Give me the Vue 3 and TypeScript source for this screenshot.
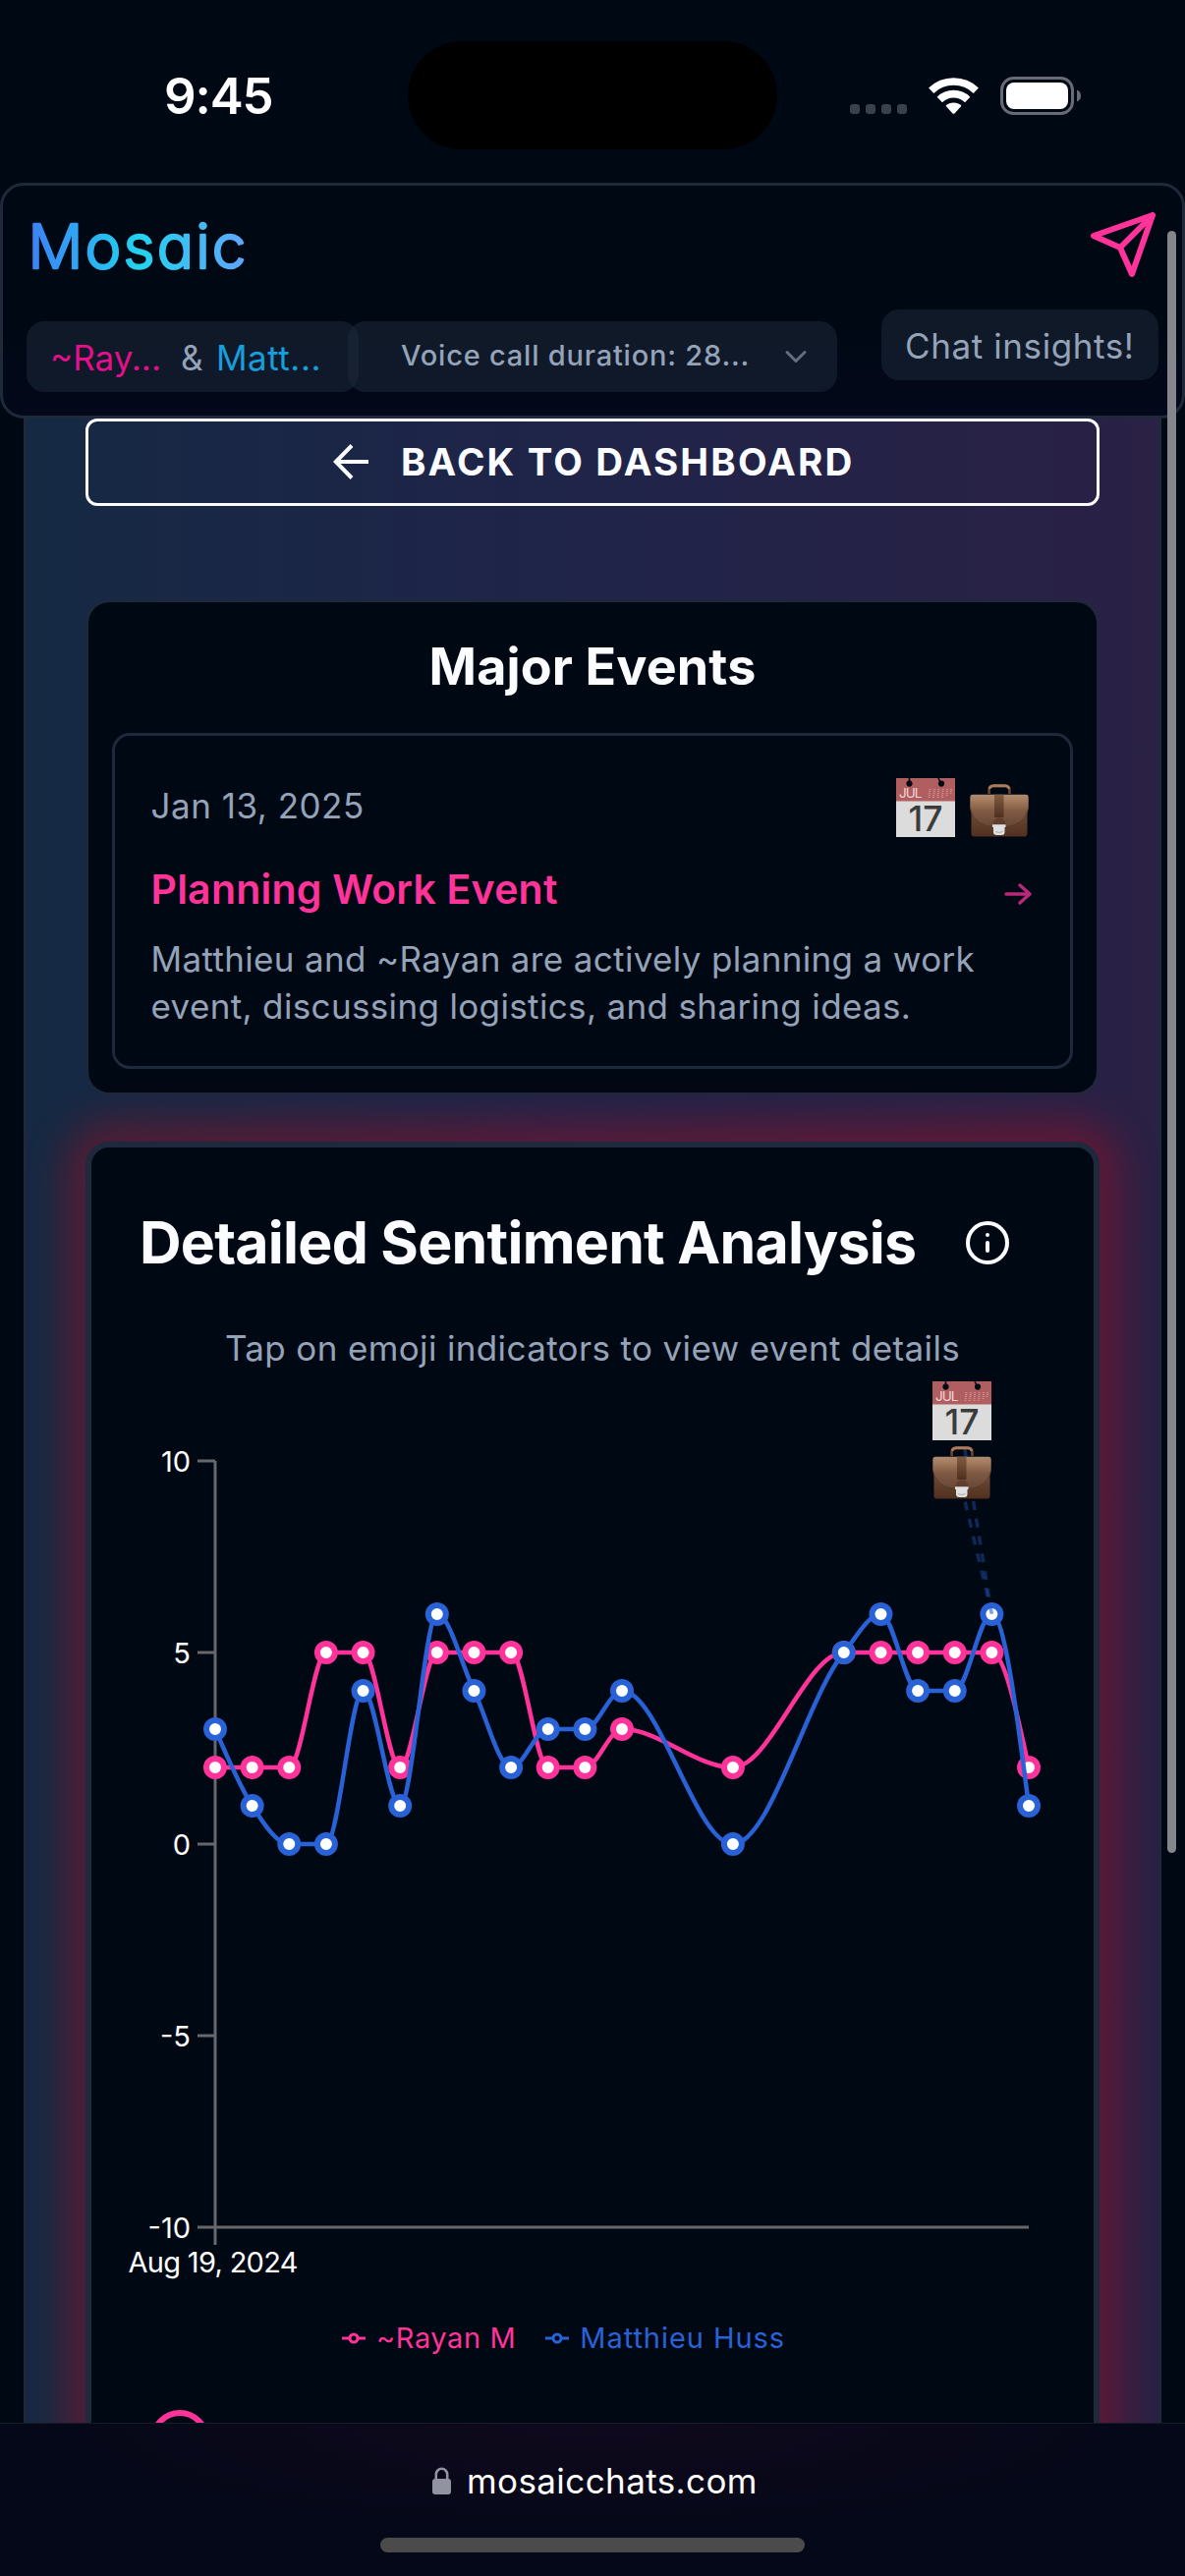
<script setup lang="ts">
import { h, type FunctionalComponent } from 'vue'

type Point = [number, number]

interface Series {
  name: string
  color: string
  values: Point[]
}

const PLOT = { left: 126, top: 91, width: 828, height: 780, steps: 22 }

const px = (i: number) => PLOT.left + (i * PLOT.width) / PLOT.steps
const py = (v: number) => PLOT.top + ((10 - v) * PLOT.height) / 20

const ticks = [10, 5, 0, -5, -10]

const days = [0, 1, 2, 3, 4, 5, 6, 7, 8, 9, 10, 11, 14, 17, 18, 19, 20, 21, 22]
const withDays = (scores: number[]): Point[] => scores.map((s, i) => [px(days[i]), py(s)])

const series: Series[] = [
  { name: '~Rayan M', color: '#ff3399', values: withDays([2, 2, 2, 5, 5, 2, 5, 5, 5, 2, 2, 3, 2, 5, 5, 5, 5, 5, 2]) },
  { name: 'Matthieu Huss', color: '#2962d6', values: withDays([3, 1, 0, 0, 4, 1, 6, 4, 2, 3, 3, 4, 0, 5, 6, 4, 4, 6, 1]) },
]

/* Monotone cubic interpolation through the points, as a path of Béziers. */
function monotone(p: Point[]): string {
  const n = p.length
  const slope = (i: number) => (p[i + 1][1] - p[i][1]) / (p[i + 1][0] - p[i][0])
  const t: number[] = new Array(n).fill(0)
  for (let i = 1; i < n - 1; i++) {
    const h0 = p[i][0] - p[i - 1][0]
    const h1 = p[i + 1][0] - p[i][0]
    const s0 = slope(i - 1)
    const s1 = slope(i)
    const m = (s0 * h1 + s1 * h0) / (h0 + h1)
    t[i] = (Math.sign(s0) + Math.sign(s1)) * Math.min(Math.abs(s0), Math.abs(s1), 0.5 * Math.abs(m)) || 0
  }
  t[0] = (3 * slope(0) - t[1]) / 2
  t[n - 1] = (3 * slope(n - 2) - t[n - 2]) / 2
  let d = `M${p[0][0]},${p[0][1]}`
  for (let i = 0; i < n - 1; i++) {
    const dx = (p[i + 1][0] - p[i][0]) / 3
    d += `C${p[i][0] + dx},${p[i][1] + dx * t[i]},${p[i + 1][0] - dx},${p[i + 1][1] - dx * t[i + 1]},${p[i + 1][0]},${p[i + 1][1]}`
  }
  return d
}

const CalendarIcon: FunctionalComponent = () =>
  h('svg', { width: 60, height: 60, viewBox: '0 0 60 60', overflow: 'visible' }, [
    h('rect', { width: 60, height: 60, fill: '#dcdcdd' }),
    h('rect', { width: 60, height: 23.5, fill: '#b15e61' }),
    h('path', { d: 'M13.5 0v5M43 0l2.5 5', stroke: '#000814', 'stroke-width': 1.6 }),
    h('circle', { cx: 13.5, cy: 5.6, r: 3.1, fill: '#000814' }),
    h('circle', { cx: 46, cy: 5.6, r: 3.1, fill: '#000814' }),
    h('path', {
      d: 'M33.5 20l1-9M38 20l1-9M42.500 20l.8-9M47 20l.8-9M51.500 18l.6-7M55.500 16l.6-5',
      stroke: '#cf8f90', 'stroke-width': 1.8, 'stroke-dasharray': '1.1 0.9', fill: 'none',
    }),
    h('text', { x: 3, y: 20.3, 'font-family': 'Inter, sans-serif', 'font-size': 13.5, fill: '#f0d6d6', textLength: 23.5 }, 'JUL'),
    h('text', { x: 12.5, y: 53.5, 'font-family': 'Inter, sans-serif', 'font-size': 35.5, 'font-weight': 500, fill: '#3b3b3c', textLength: 35 }, '17'),
  ])

const BriefcaseIcon: FunctionalComponent = () =>
  h('svg', { width: 60, height: 54, viewBox: '0 0 60 54' }, [
    h('path', { d: 'M19.600 10V5.500Q19.600 2 24 2H36Q40.400 2 40.400 5.500V10', fill: 'none', stroke: '#6d4430', 'stroke-width': 2.6 }),
    h('path', { d: 'M20.500 3.600Q21.500 1.700 24 1.700H36Q38.500 1.700 39.500 3.600', fill: 'none', stroke: '#ad7c5c', 'stroke-width': 3, 'stroke-linecap': 'round' }),
    h('path', { d: 'M1.500 20H58.500V50.500Q58.500 53.500 55.500 53.500H4.500Q1.500 53.500 1.500 50.500Z', fill: 'url(#case-body)' }),
    h('path', { d: 'M3 10.700H57Q59.700 10.700 59.700 14V24C59 36 49 43 38 43.500H22C11 43 1 36 .3 24V14Q.3 10.700 3 10.700Z', fill: 'url(#case-flap)' }),
    h('path', { d: 'M.8 26C3 36.500 12 42.500 22 43.300H38C48 42.500 57 36.500 59.200 26', fill: 'none', stroke: '#4b2d20', 'stroke-width': 1, opacity: 0.7 }),
    h('path', { d: 'M25 10.700H34.500V34H25Z', fill: 'url(#case-strap)' }),
    h('path', { d: 'M24 39Q25 34.500 30 34.500Q35 34.500 36 39V42H24Z', fill: '#5f3e2e' }),
    h('path', { d: 'M23 41.300H36.500V44H35.500V49Q35.500 52 32.500 52H27.500Q24 52 24 49V44H23Z', fill: '#dfe0e1' }),
    h('path', { d: 'M26 48.500Q29.800 50.500 33.600 48.500', fill: 'none', stroke: '#aaabad', 'stroke-width': 1 }),
  ])
</script>

<template>
  <div class="screen">
    <svg class="defs" width="0" height="0">
      <defs>
        <linearGradient id="case-flap" x1="0" y1="0" x2="0" y2="1">
          <stop offset="0" stop-color="#a98b73" />
          <stop offset="0.14" stop-color="#a98062" />
          <stop offset="0.5" stop-color="#805b44" />
          <stop offset="1" stop-color="#674636" />
        </linearGradient>
        <linearGradient id="case-body" x1="0" y1="0" x2="0" y2="1">
          <stop offset="0" stop-color="#7a5440" />
          <stop offset="1" stop-color="#50301f" />
        </linearGradient>
        <linearGradient id="case-strap" x1="0" y1="0" x2="0" y2="1">
          <stop offset="0" stop-color="#805b43" />
          <stop offset="1" stop-color="#4f2f1d" />
        </linearGradient>
      </defs>
    </svg>

    <div class="status">
      <span class="clock">9:45</span>
      <div class="island"></div>
      <svg class="signals" width="236" height="38" viewBox="0 0 236 38">
        <g fill="#3a404c">
          <rect v-for="i in 4" :key="i" :x="(i - 1) * 16" y="28" width="10" height="10" rx="3.2" />
        </g>
        <g fill="none" stroke="#fff" stroke-width="7.6">
          <path d="M82.700 14.200A33 33 0 0 1 128.300 14.200" />
          <path d="M91.300 23.400A20.400 20.400 0 0 1 119.700 23.400" />
        </g>
        <path d="M97.500 29.700A11.500 11.500 0 0 1 113.500 29.700L106.500 37.400Q105.500 38.300 104.500 37.400Z" fill="#fff" />
        <rect x="154.500" y="1.500" width="72" height="36" rx="12" fill="none" stroke="#686b76" stroke-width="3" />
        <rect x="159" y="6" width="63" height="27" rx="8" fill="#fff" />
        <path d="M231 13.500Q235 15 235 19.500Q235 24 231 25.500Z" fill="#686b76" />
      </svg>
    </div>

    <header class="topbar">
      <div class="brand-row">
        <svg class="logo" width="240" height="72" viewBox="0 0 240 72">
          <defs>
            <linearGradient id="brand" gradientUnits="userSpaceOnUse" x1="4" y1="0" x2="224" y2="0">
              <stop offset="0" stop-color="#3b82f6" />
              <stop offset="0.5" stop-color="#22d3ee" />
              <stop offset="1" stop-color="#60a5fa" />
            </linearGradient>
          </defs>
          <text x="1.500" y="59.500" textLength="222">Mosaic</text>
        </svg>
        <svg width="72" height="72" viewBox="0 0 24 24" fill="none" stroke="#ff3399" stroke-width="2" stroke-linecap="round" stroke-linejoin="round">
          <path d="M22 2 11 13M22 2 15 22 11 13 2 9Z" />
        </svg>
      </div>
      <div class="chips-row">
        <div class="chip people">
          <span class="first">~Ray...</span><span class="amp">&amp;</span><span class="second">Matt...</span>
        </div>
        <div class="chip ticker">
          <span>Voice call duration: 28...</span>
          <svg width="36" height="36" viewBox="0 0 24 24" fill="none" stroke="#626e7f" stroke-width="2" stroke-linecap="round" stroke-linejoin="round">
            <path d="m6 9 6 6 6-6" />
          </svg>
        </div>
        <div class="chip insights">Chat insights!</div>
      </div>
    </header>

    <main class="viewport">
      <div class="panel">
        <button class="back">
          <svg width="36" height="36" viewBox="0 0 36 36" fill="none" stroke="#fbfcff" stroke-width="4">
            <path d="M36 18H3M19 1.500 2.800 18 19 34.500" />
          </svg>
          <span>BACK TO DASHBOARD</span>
        </button>

        <section class="events">
          <h2>Major Events</h2>
          <article class="event">
            <div class="event-top">
              <span class="date">Jan 13, 2025</span>
              <span class="emojis"><CalendarIcon /><BriefcaseIcon /></span>
            </div>
            <div class="event-title">
              <span>Planning Work Event</span>
              <svg width="28" height="22" viewBox="0 0 28 22" fill="none" stroke="#b8297a" stroke-width="3.400" stroke-linecap="round" stroke-linejoin="round">
                <path d="M2 11H26M16 2 26 11 16 20" />
              </svg>
            </div>
            <p>Matthieu and ~Rayan are actively planning a work<br />event, discussing logistics, and sharing ideas.</p>
          </article>
        </section>

        <section class="sentiment">
          <div class="sentiment-head">
            <h2>Detailed Sentiment Analysis</h2>
            <svg width="48" height="48" viewBox="0 0 24 24" fill="none" stroke="#fbfcff" stroke-width="2" stroke-linecap="round">
              <circle cx="12" cy="12" r="10" />
              <path d="M12 16v-4M12 8h.01" />
            </svg>
          </div>
          <p class="hint">Tap on emoji indicators to view event details</p>

          <div class="chart">
            <svg width="1020" height="940" viewBox="0 0 1020 940">
              <g stroke="#66686c" stroke-width="3">
                <path :d="`M${PLOT.left} ${PLOT.top}V${PLOT.top + PLOT.height + 18}`" />
                <path :d="`M${PLOT.left} ${PLOT.top + PLOT.height}H${PLOT.left + PLOT.width}`" />
                <path v-for="t in ticks" :key="t" :d="`M${PLOT.left - 18} ${py(t)}H${PLOT.left}`" />
              </g>
              <g class="labels">
                <text v-for="t in ticks" :key="t" x="101" :y="py(t) + 11" text-anchor="end">{{ t }}</text>
                <text x="124" y="917" text-anchor="middle" textLength="173">Aug 19, 2024</text>
              </g>
              <g v-for="s in series" :key="s.name" :stroke="s.color">
                <path :d="monotone(s.values)" fill="none" stroke-width="4.5" />
                <circle v-for="(p, i) in s.values" :key="i" :cx="p[0]" :cy="p[1]" r="9" fill="#fff" stroke-width="6" />
              </g>
              <g stroke="#2962d6" stroke-opacity="0.36" stroke-width="3.500" stroke-dasharray="9 9">
                <path d="M885 115L916.400 247" />
                <path d="M886 61L916.400 247" />
              </g>
            </svg>
            <div class="markers"><CalendarIcon /><BriefcaseIcon /></div>
          </div>

          <ul class="legend">
            <li v-for="s in series" :key="s.name" :style="{ color: s.color }">
              <svg width="24" height="24" viewBox="0 0 24 24" fill="none" stroke="currentColor" stroke-width="3">
                <path d="M0 12H8M16 12H24" />
                <circle cx="12" cy="12" r="4" />
              </svg>
              <span>{{ s.name }}</span>
            </li>
          </ul>
          <div class="ring"></div>
        </section>
      </div>
    </main>

    <footer class="addressbar">
      <div class="address">
        <svg width="19" height="28" viewBox="0 0 19 28">
          <path d="M3.800 13V7.500a5.700 5.700 0 0 1 11.400 0V13" fill="none" stroke="#9293a0" stroke-width="2.600" />
          <rect y="12" width="19" height="16" rx="3" fill="#9293a0" />
        </svg>
        <span>mosaicchats.com</span>
      </div>
      <div class="home"></div>
    </footer>

    <div class="scrollbar"></div>
  </div>
</template>

<style>
body {
  background: #000814;
}
</style>

<style scoped>
.screen {
  position: relative;
  display: flex;
  flex-direction: column;
  width: 1206px;
  height: 2622px;
  overflow: hidden;
  background: #000814;
  color: #fbfcff;
  font-family: Inter, "Liberation Sans", sans-serif;
}
.screen svg {
  display: block;
  flex: none;
}
.defs {
  position: absolute;
}
h2,
p,
ul {
  margin: 0;
  padding: 0;
}

.status {
  display: flex;
  align-items: center;
  height: 110px;
  padding: 42px 0 34px 167px;
}
.clock {
  width: 248px;
  margin-top: 2px;
  color: #fff;
  font-size: 51px;
  font-weight: 600;
  letter-spacing: -1.1px;
  line-height: 60px;
}
.island {
  width: 376px;
  height: 110px;
  margin-right: 74px;
  border-radius: 55px;
  background: #000;
}
.signals {
  overflow: visible;
}

.topbar {
  box-sizing: border-box;
  height: 240px;
  padding: 24px 24px 0;
  border: 3px solid #1e2939;
  border-radius: 24px;
  background: linear-gradient(#000814 60%, #03081a);
}
.brand-row {
  display: flex;
  justify-content: space-between;
}
.logo {
  overflow: visible;
}
.logo text {
  fill: url(#brand);
  stroke: url(#brand);
  stroke-width: 2.4;
  stroke-linejoin: round;
  font-family: Inter, sans-serif;
  font-size: 62px;
  font-weight: 300;
  font-feature-settings: "cv11";
}
.chips-row {
  display: flex;
  align-items: flex-start;
  margin-top: 42px;
}
.chip {
  box-sizing: border-box;
  display: flex;
  height: 72px;
  border-radius: 18px;
  background: rgba(30, 41, 59, 0.5);
  color: #94a3b8;
  white-space: nowrap;
}
.people {
  width: 338px;
  padding-left: 24px;
  font-size: 35px;
  line-height: 75px;
}
.first {
  width: 133px;
  color: #e30f8b;
  letter-spacing: 0;
}
.amp {
  width: 36px;
}
.second {
  color: #169fdc;
  letter-spacing: 0.5px;
}
.ticker {
  align-items: center;
  justify-content: space-between;
  width: 498px;
  margin-left: -11px;
  padding: 0 24px 0 54px;
  font-size: 29px;
  font-weight: 500;
  letter-spacing: 0.79px;
}
.ticker span {
  margin-top: -3px;
}
.insights {
  width: 282px;
  margin: -12px 0 0 auto;
  padding-left: 24px;
  font-size: 35px;
  letter-spacing: 0.6px;
  line-height: 75px;
}

.viewport {
  height: 2040px;
  padding: 0 24px;
  overflow: hidden;
}
.panel {
  height: 2100px;
  padding: 0 60px;
  border: solid #1e293b;
  border-width: 0 3px;
  background: linear-gradient(90deg, #152943, #1f2449 46%, #2a2145);
}
.back {
  box-sizing: border-box;
  display: flex;
  align-items: center;
  width: 100%;
  height: 89px;
  padding: 0 0 1px 249px;
  border: 3px solid #fbfcff;
  border-radius: 12px;
  background: none;
  color: #fbfcff;
  font-family: inherit;
  font-size: 38.5px;
  font-weight: 680;
  letter-spacing: 2.15px;
}
.back span {
  margin-left: 33px;
  white-space: nowrap;
}

.events {
  box-sizing: border-box;
  height: 505px;
  margin-top: 95px;
  padding: 30px 24px 0;
  border: 3px solid rgba(30, 41, 59, 0.7);
  border-radius: 24px;
  background: #000814;
  background-clip: padding-box;
}
.events h2 {
  font-size: 52px;
  font-weight: 650;
  letter-spacing: 0.15px;
  line-height: 72px;
  text-align: center;
}
.event {
  box-sizing: border-box;
  height: 342px;
  margin-top: 31px;
  padding: 43px 39px 0 36.5px;
  border: 3px solid #1e293b;
  border-radius: 18px;
}
.event-top {
  display: flex;
  justify-content: space-between;
  height: 60px;
  padding-right: 3px;
}
.date {
  color: #94a3b8;
  font-size: 35px;
  letter-spacing: 0.5px;
  line-height: 56px;
}
.emojis {
  display: flex;
  align-items: flex-end;
  gap: 15px;
}
.event-title {
  display: flex;
  justify-content: space-between;
  margin-top: 25px;
  color: #ff3399;
  font-size: 41px;
  font-weight: 600;
  letter-spacing: 0.22px;
  line-height: 56px;
}
.event-title svg {
  margin-top: 22px;
}
.event p {
  margin-top: 19px;
  color: #94a3b8;
  font-size: 35px;
  letter-spacing: 0.35px;
  line-height: 48px;
  white-space: nowrap;
}

.sentiment {
  height: 1400px;
  margin-top: 47px;
  padding-top: 61px;
  border: 6px solid #1e293b;
  border-radius: 24px;
  background: #000814;
  box-shadow: 0 0 40px 20px rgba(239, 0, 15, 0.29);
}
.sentiment-head {
  display: flex;
  align-items: center;
  justify-content: space-between;
  padding: 0 84px 0 49px;
}
.sentiment-head h2 {
  font-size: 59px;
  font-weight: 650;
  letter-spacing: -0.76px;
  line-height: 72px;
  white-space: nowrap;
}
.hint {
  margin-top: 47px;
  color: #94a3b8;
  font-size: 35px;
  letter-spacing: 0.36px;
  line-height: 48px;
  text-align: center;
}
.chart {
  position: relative;
  height: 940px;
}
.labels {
  fill: #fff;
  font-size: 29px;
}
.markers {
  position: absolute;
  top: 10px;
  left: 856px;
  display: flex;
  flex-direction: column;
  gap: 6px;
}
.legend {
  display: flex;
  gap: 30px;
  margin-top: 22px;
  padding-left: 255px;
  list-style: none;
}
.legend li {
  display: flex;
  align-items: center;
  gap: 11px;
  font-size: 29px;
  letter-spacing: 0.6px;
  line-height: 44px;
}
.legend li + li {
  letter-spacing: 0.95px;
}
.ring {
  width: 48px;
  height: 48px;
  margin: 51px 0 0 60px;
  border: 6px solid #ff3399;
  border-radius: 50%;
}

.addressbar {
  box-sizing: border-box;
  height: 156px;
  padding-top: 34px;
  border-top: 1px solid #171a28;
  background: radial-gradient(ellipse 560px 110px at 50% 0, #0f091c, #050818);
}
.address {
  display: flex;
  align-items: center;
  gap: 16px;
  height: 48px;
  padding-left: 440px;
  color: #fff;
  font-size: 35px;
  letter-spacing: 0.4px;
}
.home {
  width: 432px;
  height: 15px;
  margin: 34px auto 0;
  border-radius: 8px;
  background: #4c4b4c;
}

.scrollbar {
  position: absolute;
  top: 235px;
  left: 1188px;
  width: 9px;
  height: 1651px;
  border-radius: 5px;
  background: #84868c;
}
</style>
